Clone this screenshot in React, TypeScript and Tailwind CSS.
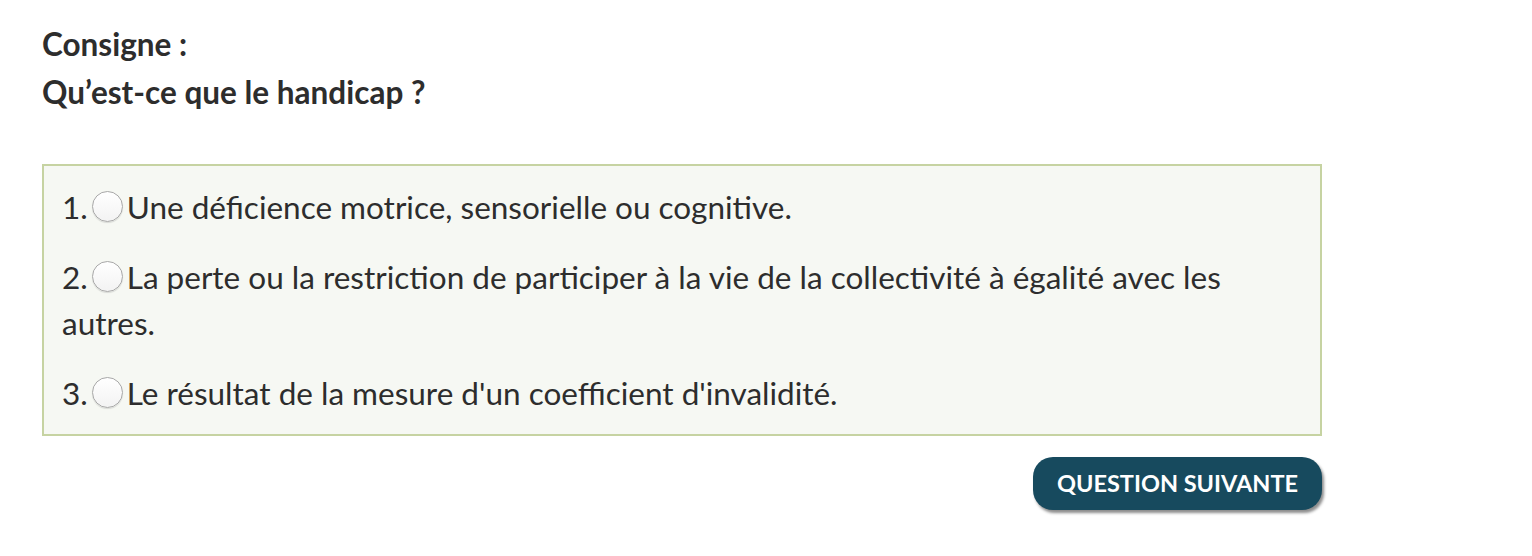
const OPTIONS = [
  "Une déficience motrice, sensorielle ou cognitive.",
  "La perte ou la restriction de participer à la vie de la collectivité à égalité avec les autres.",
  "Le résultat de la mesure d'un coefficient d'invalidité.",
];

function Radio() {
  return (
    <span className="mx-[4px] inline-block h-[31px] w-[31px] rounded-full border border-[#a8a8a8] bg-gradient-to-b from-white to-[#f3f3f3] align-[-3px] shadow-[0_1px_1px_rgba(0,0,0,0.12)]" />
  );
}

export default function App() {
  return (
    <div className="min-h-[556px] bg-white font-['Lato','Liberation_Sans',sans-serif] text-[#2d2d2d]">
      <div className="w-[1322px] pl-[42px] pt-[20px]">
        <h2 className="text-[31.5px] font-bold leading-[48px]">Consigne :</h2>
        <p className="text-[31.5px] font-bold leading-[48px]">Qu’est-ce que le handicap ?</p>

        <ol className="mt-[48px] border-2 border-[#c6d3a2] bg-[#f6f8f3] px-[18px] pt-[18px] pb-[18px] text-[31.5px] leading-[46px]">
          {OPTIONS.map((opt, i) => (
            <li key={i} className={i > 0 ? "mt-[24px]" : ""}>
              <span>{i + 1}.</span>
              <Radio />
              <span>{opt}</span>
            </li>
          ))}
        </ol>

        <div className="mt-[21px] flex justify-end">
          <button className="h-[53px] w-[289px] rounded-[20px] bg-[#174a5e] text-[23.5px] font-bold text-white shadow-[2px_3px_3px_rgba(0,0,0,0.45)]">
            QUESTION SUIVANTE
          </button>
        </div>
      </div>
    </div>
  );
}
